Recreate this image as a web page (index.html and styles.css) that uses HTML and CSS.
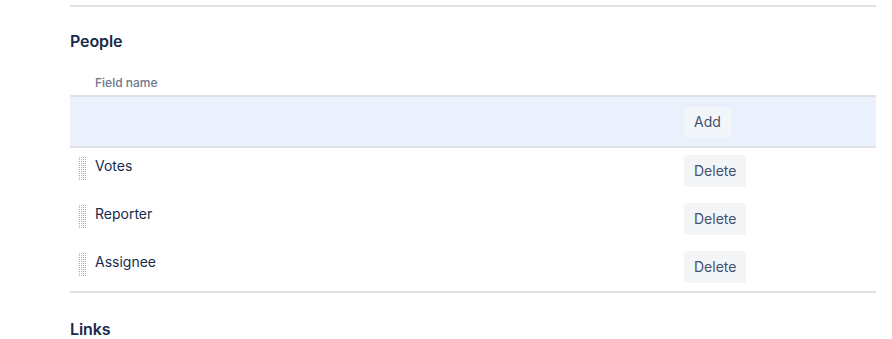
FILE: index.html
```html
<!DOCTYPE html>
<html>
<head>
<meta charset="utf-8">
<link rel="stylesheet" href="styles.css">
</head>
<body>
<svg class="defs" width="0" height="0" aria-hidden="true">
  <defs>
    <pattern id="dots" x="0" y="0" width="2" height="2" patternUnits="userSpaceOnUse">
      <rect x="0" y="0" width="1" height="1" fill="#a5adba"/>
    </pattern>
  </defs>
</svg>
<div class="page">
  <div class="rule"></div>
  <h2 class="section-title">People</h2>
  <div class="table">
    <div class="thead">
      <div class="th-handle"></div>
      <div class="th-name">Field name</div>
      <div class="th-actions"></div>
    </div>
    <div class="row row-add">
      <div class="cell-handle"></div>
      <div class="cell-name"></div>
      <div class="cell-actions"><button class="btn btn-add">Add</button></div>
    </div>
    <div class="row">
      <div class="cell-handle"><svg class="handle" width="8" height="24" viewBox="0 0 8 24"><rect width="8" height="24" fill="url(#dots)"/></svg></div>
      <div class="cell-name">Votes</div>
      <div class="cell-actions"><button class="btn">Delete</button></div>
    </div>
    <div class="row">
      <div class="cell-handle"><svg class="handle" width="8" height="24" viewBox="0 0 8 24"><rect width="8" height="24" fill="url(#dots)"/></svg></div>
      <div class="cell-name">Reporter</div>
      <div class="cell-actions"><button class="btn">Delete</button></div>
    </div>
    <div class="row last">
      <div class="cell-handle"><svg class="handle" width="8" height="24" viewBox="0 0 8 24"><rect width="8" height="24" fill="url(#dots)"/></svg></div>
      <div class="cell-name">Assignee</div>
      <div class="cell-actions"><button class="btn">Delete</button></div>
    </div>
  </div>
  <h2 class="section-title links">Links</h2>
</div>
</body>
</html>
```
FILE: styles.css
```css
* { box-sizing: border-box; }
html, body { margin: 0; padding: 0; background: #fff; }
body {
  font-family: Inter, "Noto Sans", "Liberation Sans", sans-serif;
  color: #172b4d;
  width: 892px;
  height: 339px;
  overflow: hidden;
}
.defs {
  position: absolute;
  width: 0;
  height: 0;
}
.page {
  padding: 5px 16px 0 70px;
}
.rule {
  height: 2px;
  background: #dfe1e6;
}
.section-title {
  margin: 0;
  font-size: 16px;
  font-weight: 600;
  line-height: 20px;
  color: #172b4d;
  padding-top: 24px;
  letter-spacing: -0.1px;
}
.section-title.links {
  padding-top: 26px;
}
.table {
  margin-top: 19px;
}
.thead, .row {
  display: grid;
  grid-template-columns: 25px 1fr 192px;
}
.thead {
  border-bottom: 2px solid #dfe1e6;
  height: 27px;
}
.th-name {
  font-size: 12px;
  font-weight: 500;
  color: #6b778c;
  line-height: 14px;
  padding-top: 6px;
}
.row {
  height: 48px;
}
.row-add {
  background: #eaf1fd;
  border-bottom: 2px solid #dfe1e6;
  height: 51px;
}
.row.last {
  border-bottom: 2px solid #dfe1e6;
  height: 49px;
}
.cell-name {
  font-size: 14px;
  line-height: 20px;
  padding-top: 8px;
  color: #172b4d;
}
.cell-handle {
  padding: 9px 0 0 9px;
}
.handle {
  display: block;
}
.cell-actions {
  padding-top: 7px;
}
.row-add .cell-actions {
  padding-top: 10px;
}
.btn {
  font-family: inherit;
  font-size: 14px;
  font-weight: 400;
  color: #42526e;
  background: #f4f5f7;
  border: none;
  border-radius: 3px;
  height: 32px;
  padding: 0 10px;
  line-height: 32px;
  cursor: pointer;
}
.btn-add {
  height: 30px;
  line-height: 30px;
  padding: 0 10px;
  background: #f2f5fa;
}
```
